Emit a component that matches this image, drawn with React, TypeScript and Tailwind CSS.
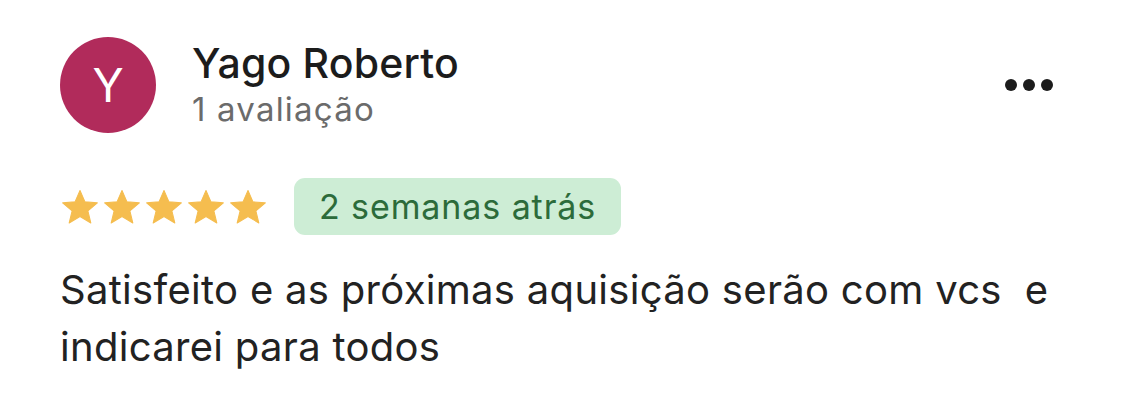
import React from 'react';

// Single star glyph used in the rating row
const Star = () => (
  <svg viewBox="1.6 1.9 20.8 19.8" className="w-[36px] h-[34px]" fill="#F5BD4F">
    <path
      d="M12 2.2l2.9 6.6 7.2.6-5.5 4.7 1.7 7-6.3-3.8-6.3 3.8 1.7-7L1.9 9.4l7.2-.6z"
      stroke="#F5BD4F"
      strokeWidth="0.6"
      strokeLinejoin="round"
    />
  </svg>
);

const App: React.FC = () => {
  return (
    <div className="w-[1125px] h-[417px] bg-white pt-[37px] pl-[60px] pr-[72px]" style={{ fontFamily: 'Inter, "Noto Sans", sans-serif' }}>
      {/* Header: avatar, author and menu */}
      <div className="flex items-start">
        <div className="w-[96px] h-[96px] rounded-full bg-[#B12B5B] flex items-center justify-center text-white text-[46px] leading-none">
          Y
        </div>
        <div className="ml-[36px] flex-1 pt-[2px]">
          <div className="text-[41px] leading-[48px] tracking-[0.2px] text-[#1c1c1c] font-medium">Yago Roberto</div>
          <div className="text-[33px] leading-[44px] tracking-[1.2px] text-[#6b6b6b]">1 avaliação</div>
        </div>
        <div className="flex gap-[6px] mt-[42px]">
          <span className="w-[12px] h-[12px] rounded-full bg-[#1c1c1c]" />
          <span className="w-[12px] h-[12px] rounded-full bg-[#1c1c1c]" />
          <span className="w-[12px] h-[12px] rounded-full bg-[#1c1c1c]" />
        </div>
      </div>

      {/* Rating and age */}
      <div className="flex items-center mt-[45px]">
        <div className="flex gap-[6px] ml-[2px]">
          <Star />
          <Star />
          <Star />
          <Star />
          <Star />
        </div>
        <div className="ml-[28px] h-[57px] px-[25px] rounded-[11px] bg-[#CDEDD5] text-[#2C6B3A] text-[34px] tracking-[0.9px] flex items-center">
          2 semanas atrás
        </div>
      </div>

      {/* Review body */}
      <p className="mt-[26px] text-[40px] leading-[57px] tracking-[0.3px] text-[#222]">
        Satisfeito e as próximas aquisição serão com vcs&nbsp; e
        <br />
        indicarei para todos
      </p>
    </div>
  );
};

export default App;
